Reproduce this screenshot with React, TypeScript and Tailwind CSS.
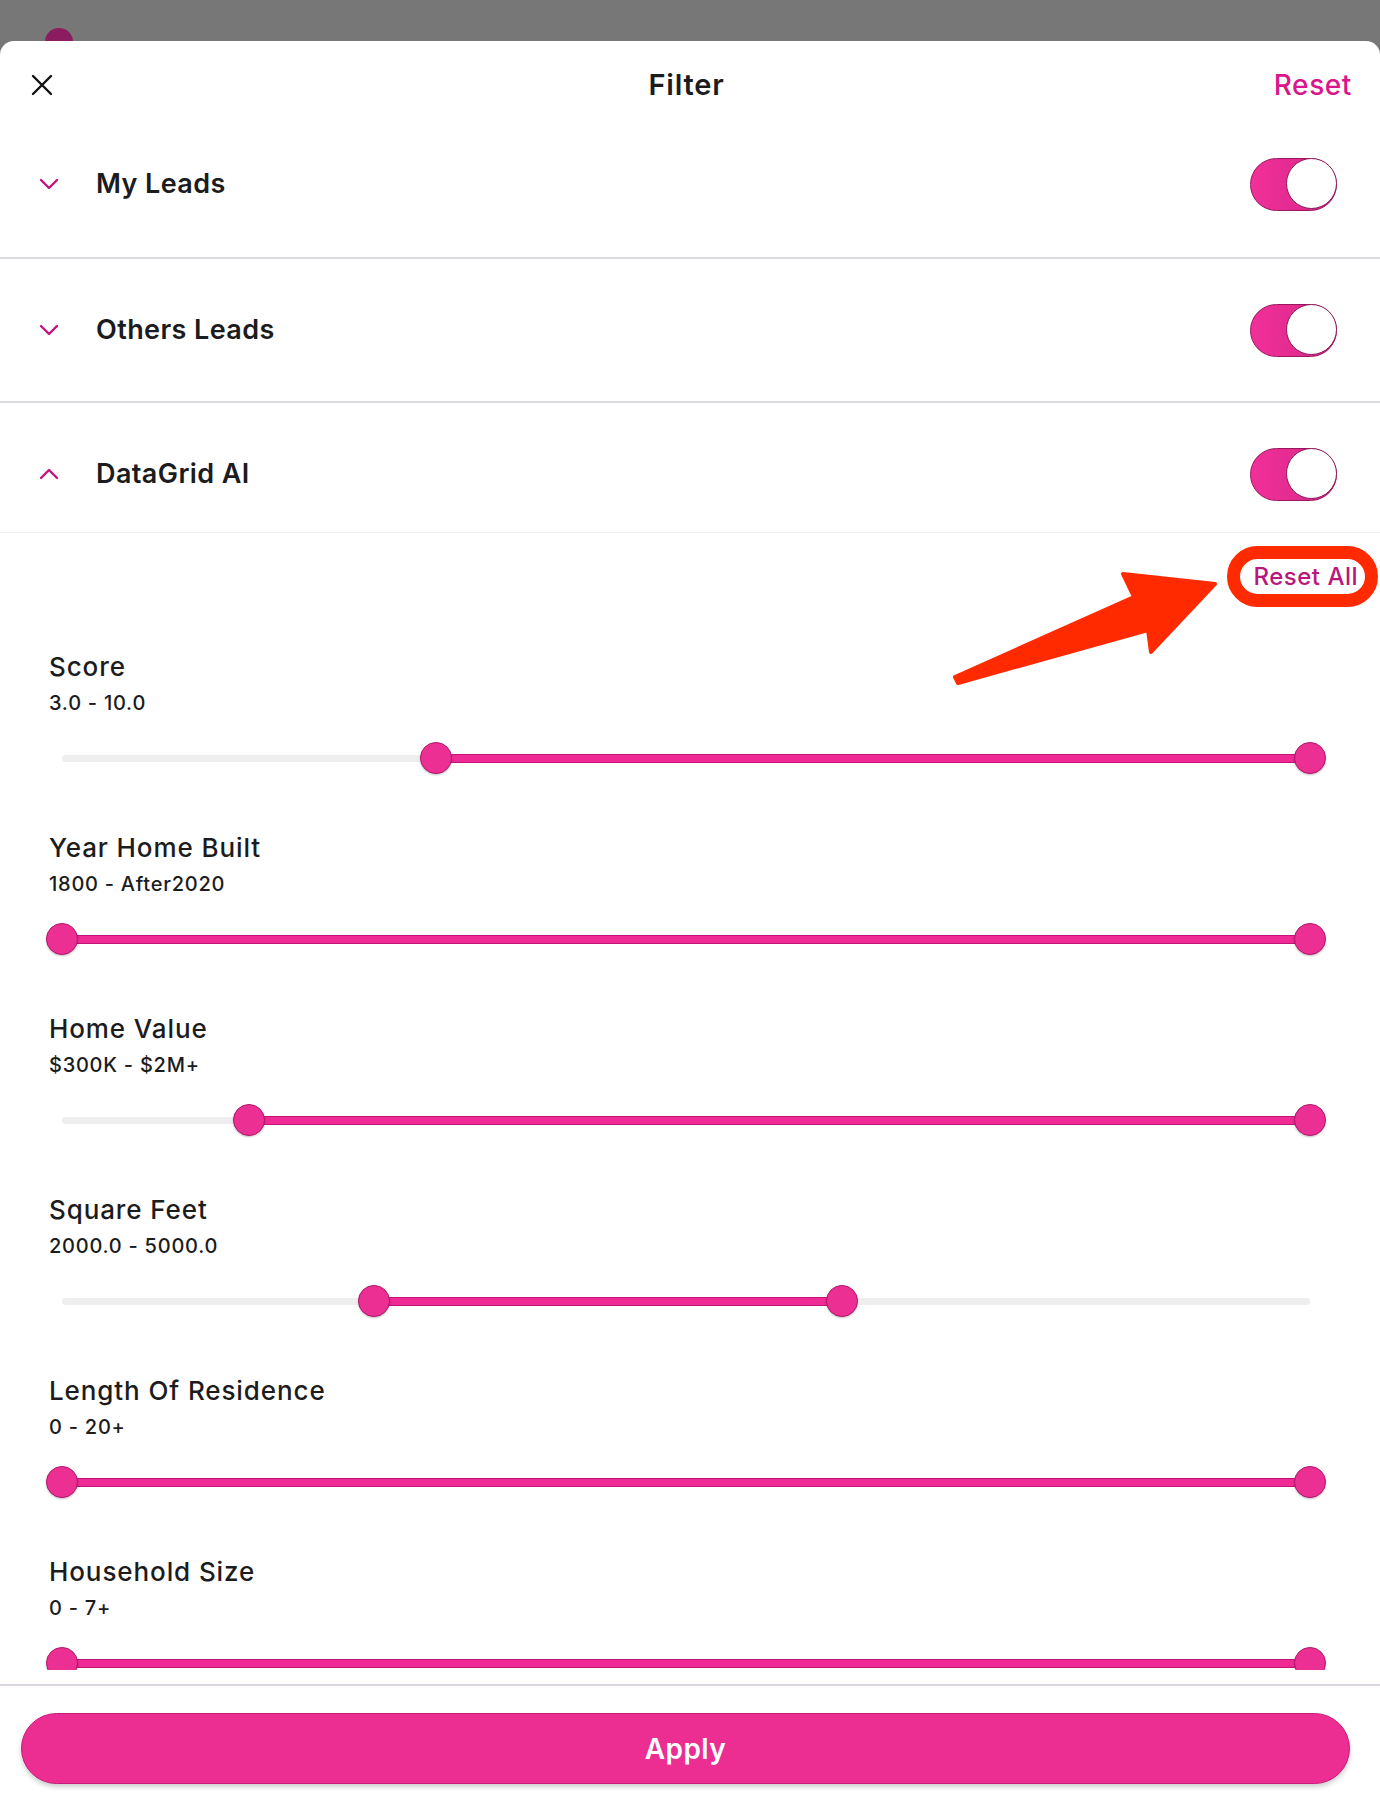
import React from 'react'

type Range = { title: string; value: string; from: number; to: number }

const ranges: Range[] = [
  { title: 'Score', value: '3.0 - 10.0', from: 0.3, to: 1 },
  { title: 'Year Home Built', value: '1800 - After2020', from: 0, to: 1 },
  { title: 'Home Value', value: '$300K - $2M+', from: 0.15, to: 1 },
  { title: 'Square Feet', value: '2000.0 - 5000.0', from: 0.25, to: 0.625 },
  { title: 'Length Of Residence', value: '0 - 20+', from: 0, to: 1 },
  { title: 'Household Size', value: '0 - 7+', from: 0, to: 1 },
]

function Chevron({ up }: { up?: boolean }) {
  return (
    <svg width="20" height="12" viewBox="0 0 20 12" fill="none">
      <polyline
        points={up ? '2,10 10,2 18,10' : '2,2 10,10 18,2'}
        stroke="#c8127c"
        strokeWidth="2.4"
        strokeLinecap="round"
        strokeLinejoin="round"
      />
    </svg>
  )
}

function Toggle() {
  return (
    <div className="relative w-[87px] h-[53px] rounded-full bg-gradient-to-r from-[#f22f9a] to-[#d42886] border-[1.5px] border-[#9b1660]">
      <div className="absolute right-[-1px] top-[-1px] w-[51px] h-[51px] rounded-full bg-white border-[1.5px] border-[#8d1a55]" />
    </div>
  )
}

function Row({ label, up, className }: { label: string; up?: boolean; className: string }) {
  return (
    <div className={`flex items-center justify-between pl-[39px] pr-[43px] ${className}`}>
      <div className="flex items-center gap-[37px]">
        <Chevron up={up} />
        <span className="text-[27px] font-semibold text-[#1c1c1e] tracking-[0.4px]">{label}</span>
      </div>
      <Toggle />
    </div>
  )
}

function Slider({ from, to }: { from: number; to: number }) {
  return (
    <div className="relative ml-[62px] w-[1248px] h-[40px]">
      <div className="absolute left-0 right-0 top-[17px] h-[7px] rounded-full bg-[#eeeeee]" />
      <div
        className="absolute top-[16px] h-[9px] bg-[#ef2a94] border-y border-[#c3127a]"
        style={{ left: `${from * 100}%`, width: `${(to - from) * 100}%` }}
      />
      {[from, to].map((p, i) => (
        <div
          key={i}
          className="absolute top-[4px] w-[32px] h-[32px] -ml-[16px] rounded-full bg-[#ec2f92] border border-[#b3176e] shadow-[0_1px_2px_rgba(0,0,0,0.25)]"
          style={{ left: `${p * 100}%` }}
        />
      ))}
    </div>
  )
}

export default function App() {
  return (
    <div className="relative w-[1380px] h-[1802px] overflow-hidden bg-[#777777] font-['Inter','Liberation_Sans',sans-serif]">
      {/* badge peeking out behind the sheet */}
      <div className="absolute left-[45px] top-[28px] w-[28px] h-[28px] rounded-full bg-[#8a1c5f]" />

      <div className="relative z-10 mt-[41px] h-[1761px] bg-white rounded-t-[14px] flex flex-col">
        {/* Header */}
        <div className="h-[86px] pt-[2px] grid grid-cols-[1fr_auto_1fr] items-center pl-[31px] pr-[28px]">
          <svg width="22" height="22" viewBox="0 0 22 22" fill="none">
            <path d="M2 2L20 20M20 2L2 20" stroke="#111" strokeWidth="2.4" strokeLinecap="round" />
          </svg>
          <span className="mr-[10px] text-[29px] font-semibold tracking-[0.8px] text-[#1c1c1e]">Filter</span>
          <span className="justify-self-end text-[28px] font-medium tracking-[0.6px] text-[#d9168b]">Reset</span>
        </div>

        <Row label="My Leads" className="h-[132px] pb-[16px] border-b-2 border-[#dcd9e1]" />
        <Row label="Others Leads" className="h-[144px] border-b-2 border-[#dcd9e1]" />
        <Row label="DataGrid AI" up className="h-[130px] pt-[13px] border-b border-[#efefef]" />

        {/* Scroll area */}
        <div className="relative h-[1137px] overflow-hidden">
          <div className="flex justify-end pt-[29px] pr-[22px]">
            <span className="text-[24px] leading-[30px] font-medium tracking-[0.5px] text-[#b8177c]">Reset All</span>
          </div>

          <div className="mt-[59px]">
            {ranges.map((r) => (
              <div key={r.title} className="h-[181px]">
                <div className="pl-[49px] text-[26px] leading-[32px] font-medium tracking-[0.9px] text-[#1c1c1e]">{r.title}</div>
                <div className="pl-[49px] mt-[7px] text-[20px] leading-[26px] font-medium tracking-[0.75px] text-[#1c1c1e]">{r.value}</div>
                <div className="mt-[22px]">
                  <Slider from={r.from} to={r.to} />
                </div>
              </div>
            ))}
          </div>
        </div>

        {/* Footer */}
        <div className="mt-[14px] border-t-2 border-[#dcd6e0] pt-[27px] pl-[21px] pr-[30px]">
          <button className="w-full h-[71px] rounded-full bg-[#ec2d92] border border-[#c81a7c] shadow-[0_3px_5px_rgba(0,0,0,0.2)] text-white text-[28px] font-semibold tracking-[0.4px]">
            Apply
          </button>
        </div>
      </div>

      {/* Annotation */}
      <div className="absolute z-20 left-[1227px] top-[546px] w-[151px] h-[61px] rounded-full border-[13px] border-[#ff2a00]" />
      <svg className="absolute z-20 left-0 top-0 pointer-events-none" width="1380" height="1802">
        <polygon
          points="955,677 1134,597 1123,574 1215,584 1151,652 1148,630 958,683"
          fill="#ff2a00"
          stroke="#ff2a00"
          strokeWidth="4"
          strokeLinejoin="round"
        />
      </svg>
    </div>
  )
}
